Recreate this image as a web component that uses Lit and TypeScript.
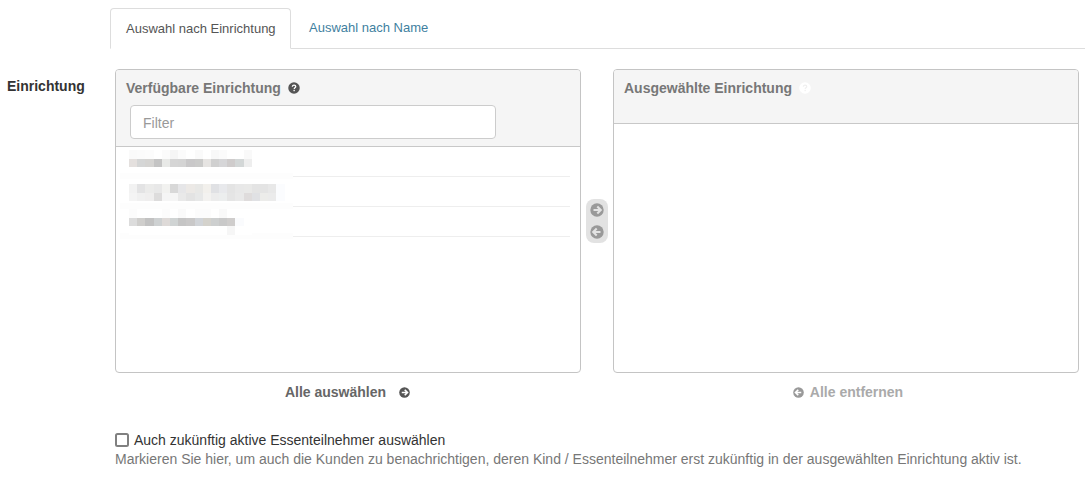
import { LitElement, html, css, svg } from "lit";
import { customElement } from "lit/decorators.js";

const ROWS: { top: number; cells: string[][]; }[] = [
  { top: 3, cells: [
    ["#fafafa","#fbfbfb","#fcfcfc","#fff","#fbfbfb","#f5f5f5","#fbfbfb","#fff","#fafafa","#fff","#f8f8f8","#fbfbfb","#fff","#fff","#f9f9f9"],
    ["#e4e0de","#d5d6d6","#d5d4d2","#c4c4c4","#e8e9e7","#d5d5d5","#d4d4d4","#c9c8c9","#cbcbca","#e6e4e2","#d0d0d0","#d6d6d8","#cfcccc","#d3d7d7","#eeeeee"],
  ]},
  { top: 37, cells: [
    ["#f2f2f2","#e3e3e4","#ebebea","#e8e8e8","#f2f2f0","#d8d8d8","#e6e6e8","#ece9e6","#e8e8e6","#f2f0ec","#e0e1e4","#e8e9ec","#e4e4e4","#e8e8e8","#e9e9e8","#e4e4e4","#e4e4e4","#e8e8e8","#fbfcfe"],
    ["#f4f4f4","#f0f0f0","#efeeee","#dddcdc","#f5f5f5","#f5f5f5","#e9e9e9","#e3e3e3","#e7e8e8","#f3f2f0","#ececec","#eceeee","#e5e5e5","#e9e9e9","#dfdcdc","#e0e1e4","#ececea","#ebebeb","#fbfcfe"],
  ]},
  { top: 62, cells: [
    ["#fcfcfc","#fff","#fff","#fff","#fcfcfc","#fff","#fafafa","#fff","#fcfcfc","#fcfcfc","#fff","#f9f9f9","#fff","#fff","#fff"],
    ["#dcdcdc","#cfcecc","#c2c2c2","#ced1d2","#dedad8","#d0d4d4","#c5c5c5","#c9c8c8","#d1d4d8","#d4d2cc","#cdcfcf","#c9c9c9","#cfcdcc","#fafbfd","#fff"],
    ["#fff","#fff","#fff","#fff","#fff","#fff","#fff","#fff","#fff","#fff","#fff","#fff","#f6f6f6","#fff","#fff"],
  ]},
];

const Circle = (kind: "q" | "r" | "l", size: number) => html`<svg class="ico" width=${size} height=${size} viewBox="0 0 24 24" aria-hidden="true">
  <circle cx="12" cy="12" r="11.5" fill="currentColor"></circle>
  ${kind === "q"
    ? svg`<path d="M8.6 9.4c.2-2 1.6-3.1 3.5-3.1 2 0 3.4 1.2 3.4 2.9 0 2.5-3 2.5-3 4.7" fill="none" stroke="var(--ico-fg,#fff)" stroke-width="2.6"></path><rect x="10.9" y="15.6" width="2.8" height="2.8" fill="var(--ico-fg,#fff)"></rect>`
    : kind === "r"
    ? svg`<path d="M12.5 6 18.500 12l-6 6M6 12h11" fill="none" stroke="var(--ico-fg,#fff)" stroke-width="3.6"></path>`
    : svg`<path d="M11.500 6 5.500 12l6 6M7 12h11" fill="none" stroke="var(--ico-fg,#fff)" stroke-width="3.6"></path>`}
</svg>`;

@customElement("app-root")
export class AppRoot extends LitElement {
  static styles = css`
    :host { display: block; width: 1085px; height: 485px; overflow: hidden; background: #fff; color: #333; font-family: "Liberation Sans", Arial, sans-serif; font-size: 14px; line-height: 20px; }
    * { box-sizing: border-box; }
    .ico { display: block; flex: none; }
    .tabs { display: flex; margin-left: 110px; padding-top: 8px; height: 49px; border-bottom: 1px solid #ddd; }
    .tab { height: 41px; padding: 10px 15px; font-size: 13px; color: #3f7f9f; white-space: nowrap; }
    .tab.active { width: 181px; color: #555; background: #fff; border: 1px solid #ddd; border-bottom-color: #fff; border-radius: 4px 4px 0 0; margin-right: 3px; }
    .form { display: grid; grid-template-columns: 115px 466px 32px 466px; margin-top: 20px; }
    .label { padding: 7px 0 0 7px; font-weight: 700; color: #333; }
    .panel { height: 304px; border: 1px solid #c4c4c4; border-radius: 4px; overflow: hidden; }
    .head { background: #f5f5f5; border-bottom: 1px solid #c8c8c8; padding: 8px 10px 0; }
    .head.left { height: 77px; }
    .head.right { height: 54px; padding-left: 10px; }
    .title { display: flex; align-items: center; gap: 7px; font-weight: 700; color: #777; height: 20px; }
    .title .ico { color: #555; }
    .right .ico { color: #fff; --ico-fg: #f0f0f0; }
    .filter { margin: 7px 0 0 4px; width: 366px; height: 34px; border: 1px solid #ccc; border-radius: 4px; background: #fff; padding: 7px 12px 5px; color: #999; }
    .list { position: relative; padding: 0 10px; }
    .item { height: 30px; border-bottom: 1px solid #eee; }
    .band { position: absolute; left: 4px; width: 173px; height: 6px; background: #fdfdfd; }
    .veil { display: flex; flex-direction: column; position: absolute; left: 13px; }
    .mrow { display: flex; height: 8.5px; }
    .mrow span { width: 8.2px; }
    .gutter { display: flex; justify-content: center; }
    .btns { margin-top: 130px; width: 22px; height: 44px; padding-top: 4px; border-radius: 8px; background: #e2e2e2; display: flex; flex-direction: column; align-items: center; gap: 8px; color: #999; --ico-fg: #e2e2e2; }
    .sub { display: grid; grid-template-columns: 115px 466px 32px 466px; height: 38px; }
    .act { display: flex; align-items: center; justify-content: center; gap: 13px; font-weight: 700; color: #666; height: 38px; --ico-fg: #fff; padding-right: 1px; }
    .act .ico { color: #555; }
    .act.dim { color: #aaa; gap: 6px; padding: 0 0 0 4px; }
    .act.dim .ico { color: #999; }
    .check { margin: 19px 0 0 115px; }
    .check-line { display: flex; align-items: center; gap: 5px; height: 20px; color: #333; }
    .box { width: 14px; height: 14px; border: 2px solid #808080; border-radius: 2.500px; background: #fff; flex: none; }
    .help { color: #777; height: 20px; margin-top: -1px; }
  `;

  private mosaic(i: number) {
    return html`<div class="veil" style="top:${ROWS[i].top}px">
      ${ROWS[i].cells.map((r) => html`<div class="mrow">${r.map((c) => html`<span style="background:${c}"></span>`)}</div>`)}
    </div>`;
  }

  render() {
    return html`
      <div class="tabs">
        <div class="tab active">Auswahl nach Einrichtung</div>
        <div class="tab">Auswahl nach Name</div>
      </div>
      <div class="form">
        <div class="label">Einrichtung</div>
        <div class="panel">
          <div class="head left">
            <div class="title">Verfügbare Einrichtung ${Circle("q", 12)}</div>
            <div class="filter">Filter</div>
          </div>
          <div class="list">
            <div class="item"></div><div class="item"></div><div class="item"></div>
            ${[26, 56, 86].map((t) => html`<div class="band" style="top:${t}px"></div>`)}
            ${[0, 1, 2].map((i) => this.mosaic(i))}
          </div>
        </div>
        <div class="gutter">
          <div class="btns">${Circle("r", 14)}${Circle("l", 14)}</div>
        </div>
        <div class="panel right">
          <div class="head right">
            <div class="title">Ausgewählte Einrichtung ${Circle("q", 12)}</div>
          </div>
        </div>
      </div>
      <div class="sub">
        <div></div>
        <div class="act">Alle auswählen ${Circle("r", 11)}</div>
        <div></div>
        <div class="act dim">${Circle("l", 11)} Alle entfernen</div>
      </div>
      <div class="check">
        <div class="check-line"><span class="box"></span>Auch zukünftig aktive Essenteilnehmer auswählen</div>
        <div class="help">Markieren Sie hier, um auch die Kunden zu benachrichtigen, deren Kind / Essenteilnehmer erst zukünftig in der ausgewählten Einrichtung aktiv ist.</div>
      </div>
    `;
  }
}
